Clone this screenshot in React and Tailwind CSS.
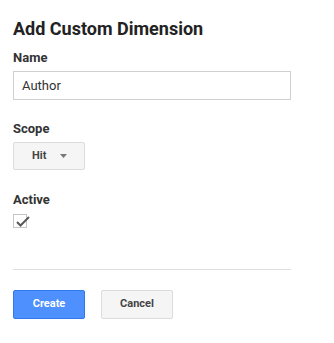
export default function App() {
  return (
    <div className="w-[334px] h-[343px] bg-white pl-[13px] pt-[17px]" style={{ fontFamily: "Roboto, 'Liberation Sans', sans-serif" }}>
      <div className="text-[18px] leading-[24px] font-bold text-[#222]">Add Custom Dimension</div>
      <div className="mt-[9px] text-[13px] leading-[16px] font-bold text-[#333]">Name</div>
      <div className="mt-[5px] w-[278px] h-[29px] border border-[#d0d0d0] pl-[8px] pt-[1px] flex items-center text-[13px] text-[#333]">Author</div>
      <div className="mt-[21px] text-[13px] leading-[16px] font-bold text-[#333]">Scope</div>
      <div className="mt-[5px] w-[72px] h-[28px] border border-[#dcdcdc] rounded-[2px] bg-[#f5f5f5] flex items-center pl-[18px] text-[11px] font-bold text-[#444]">
        <span>Hit</span>
        <svg className="ml-[14px]" width="7" height="4" viewBox="0 0 7 4"><path d="M0 0h7L3.5 4z" fill="#777" /></svg>
      </div>
      <div className="mt-[22px] text-[13px] leading-[16px] font-bold text-[#333]">Active</div>
      <div className="relative mt-[6px] w-[14px] h-[14px] border border-[#c6c6c6]">
        <svg width="14" height="11" viewBox="0 0 14 11" className="absolute left-[2px] top-[1px]"><path d="M1 6l3.5 3.5L13 1" stroke="#5a5a5a" strokeWidth="2" fill="none" /></svg>
      </div>
      <div className="mt-[41px] w-[278px] h-px bg-[#e0e0e0]"></div>
      <div className="mt-[20px] flex gap-[16px]">
        <button className="w-[72px] h-[29px] rounded-[2px] border border-[#3079ed] bg-[#4d90fe] text-white text-[11px] font-bold">Create</button>
        <button className="w-[72px] h-[29px] rounded-[2px] border border-[#dcdcdc] bg-[#f5f5f5] text-[#444] text-[11px] font-bold">Cancel</button>
      </div>
    </div>
  );
}
